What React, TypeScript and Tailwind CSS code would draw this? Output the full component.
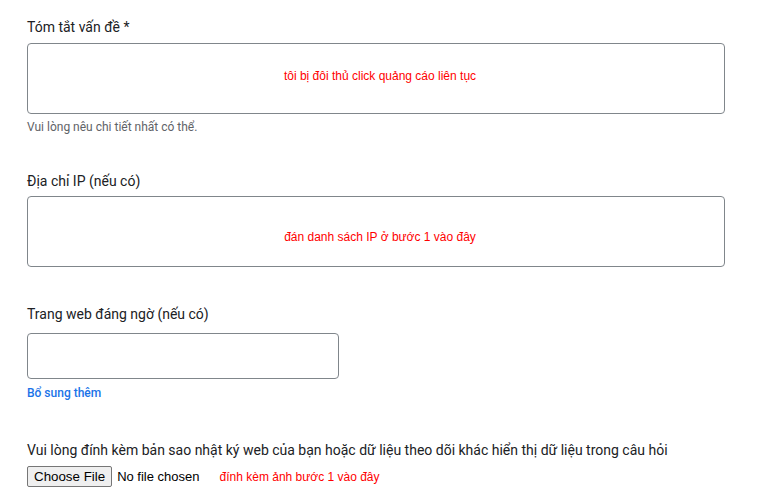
export default function App() {
  return (
    <div className="w-[760px] h-[501px] bg-white overflow-hidden font-['Roboto',sans-serif] text-[#202124]">
      <div className="pl-[27px] pt-[17px]">
        {/* Summary */}
        <label className="block text-[14px] leading-[20px]">Tóm tắt vấn đề *</label>
        <div className="mt-[6px] w-[698px] h-[71px] border border-[#80868b] rounded-[4px] flex justify-center pt-[24px] pl-[8px]">
          <span className="font-['Liberation_Sans',Arial,sans-serif] text-[12px] leading-[16px] text-[#ff0000]">
            tôi bị đôi thủ click quảng cáo liên tục
          </span>
        </div>
        <p className="mt-[5px] text-[12px] leading-[16px] text-[#5f6368]">Vui lòng nêu chi tiết nhất có thể.</p>

        {/* IP */}
        <label className="block mt-[36px] text-[14px] leading-[20px]">Địa chỉ IP (nếu có)</label>
        <div className="mt-[5px] w-[698px] h-[71px] border border-[#80868b] rounded-[4px] flex justify-center pt-[32px] pl-[8px]">
          <span className="font-['Liberation_Sans',Arial,sans-serif] text-[12px] leading-[16px] text-[#ff0000]">
            đán danh sách IP ở bước 1 vào đây
          </span>
        </div>

        {/* Website */}
        <label className="block mt-[37px] text-[14px] leading-[20px]">Trang web đáng ngờ (nếu có)</label>
        <div className="mt-[9px] w-[312px] h-[46px] border border-[#80868b] rounded-[4px]" />
        <a className="block mt-[6px] text-[12px] leading-[16px] font-medium text-[#1a73e8]">Bổ sung thêm</a>

        {/* Attachment */}
        <p className="mt-[39px] text-[14px] leading-[20px]">
          Vui lòng đính kèm bản sao nhật ký web của bạn hoặc dữ liệu theo dõi khác hiển thị dữ liệu trong câu hỏi
        </p>
        <div className="mt-[6px] flex items-center font-['Liberation_Sans',Arial,sans-serif]">
          <span className="h-[21px] px-[6px] flex items-center bg-[#efefef] border border-[#767676] rounded-[2px] text-[13.33px] text-black">
            Choose File
          </span>
          <span className="ml-[5px] text-[13px] text-black">No file chosen</span>
          <span className="ml-[20px] text-[12px] text-[#ff0000]">đính kèm ảnh bước 1 vào đây</span>
        </div>
      </div>
    </div>
  );
}
